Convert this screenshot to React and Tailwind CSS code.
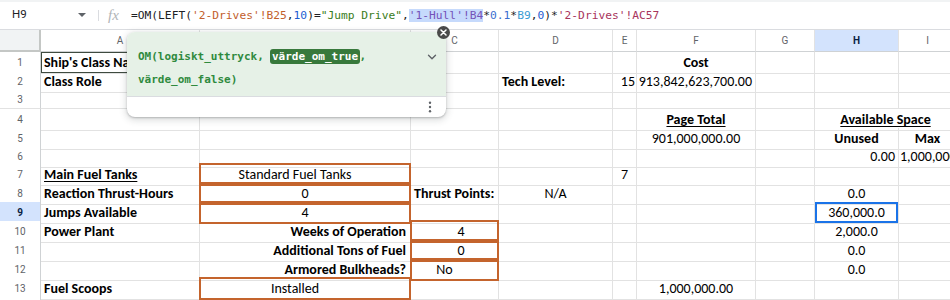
import React from "react";

const GRID =
  "grid grid-cols-[41px_159px_211px_88px_114px_24px_119px_59px_84px_58px]";
const CELLFONT = "font-[family-name:Carlito,Lato,sans-serif] text-[14px] text-black";
const UIFONT = "font-[family-name:Roboto,Arial,sans-serif]";
const MONO = "font-[family-name:'DejaVu_Sans_Mono',monospace]";

const LETTERS = ["A", "B", "C", "D", "E", "F", "G", "H", "I"];

const ROWS = [
  { n: 1, h: "h-[19px]", c: { A: { t: "Ship's Class Name", b: 1, box: "a1" }, F: { t: "Cost", b: 1, j: "c" } } },
  {
    n: 2,
    h: "h-[19px]",
    c: {
      A: { t: "Class Role", b: 1 },
      D: { t: "Tech Level:", b: 1 },
      E: { t: "15", j: "r", p: "pl-0 pr-[1px]" },
      F: { t: "913,842,623,700.00", j: "r" },
    },
  },
  { n: 3, h: "h-[19px]", c: {} },
  {
    n: 4,
    h: "h-[19px]",
    c: {
      F: { t: "Page Total", b: 1, u: 1, j: "c" },
      H: { t: "Available Space", b: 1, u: 1, j: "c", span: 1 },
    },
  },
  {
    n: 5,
    h: "h-[18px]",
    c: {
      F: { t: "901,000,000.00", j: "c" },
      H: { t: "Unused", b: 1, j: "c" },
      I: { t: "Max", b: 1, j: "c" },
    },
  },
  { n: 6, h: "h-[18px]", c: { H: { t: "0.00", j: "r" }, I: { t: "1,000,000.00", p: "pl-[1px]" } } },
  {
    n: 7,
    h: "h-[19px]",
    c: {
      A: { t: "Main Fuel Tanks", b: 1, u: 1 },
      B: { t: "Standard Fuel Tanks", j: "c", p: "pl-[3px] pr-[23px]", box: "o" },
      E: { t: "7", j: "c" },
    },
  },
  {
    n: 8,
    h: "h-[19px]",
    c: {
      A: { t: "Reaction Thrust-Hours", b: 1 },
      B: { t: "0", j: "c", box: "o" },
      C: { t: "Thrust Points:", b: 1 },
      D: { t: "N/A", j: "c" },
      H: { t: "0.0", j: "c" },
    },
  },
  {
    n: 9,
    h: "h-[19px]",
    sel: 1,
    c: {
      A: { t: "Jumps Available", b: 1 },
      B: { t: "4", j: "c", box: "o" },
      H: { t: "360,000.0", j: "c", box: "sel" },
    },
  },
  {
    n: 10,
    h: "h-[19px]",
    c: {
      A: { t: "Power Plant", b: 1 },
      B: { t: "Weeks of Operation", b: 1, j: "r", p: "pl-[3px] pr-[4px]" },
      C: { t: "4", j: "c", p: "pl-[16px] pr-[3px]", box: "o" },
      H: { t: "2,000.0", j: "c" },
    },
  },
  {
    n: 11,
    h: "h-[19px]",
    c: {
      B: { t: "Additional Tons of Fuel", b: 1, j: "r", p: "pl-[3px] pr-[4px]" },
      C: { t: "0", j: "c", p: "pl-[16px] pr-[3px]", box: "o" },
      H: { t: "0.0", j: "c" },
    },
  },
  {
    n: 12,
    h: "h-[19px]",
    c: {
      B: { t: "Armored Bulkheads?", b: 1, j: "r", p: "pl-[3px] pr-[4px]" },
      C: { t: "No", j: "c", p: "pl-[3px] pr-[23px]", box: "o" },
      H: { t: "0.0", j: "c" },
    },
  },
  {
    n: 13,
    h: "h-[19px]",
    c: {
      A: { t: "Fuel Scoops", b: 1 },
      B: { t: "Installed", j: "c", p: "pl-[3px] pr-[23px]", box: "o" },
      F: { t: "1,000,000.00", j: "c" },
    },
  },
  { n: 14, h: "h-[19px]", hide: 1, c: {} },
];

const FORMULA = [
  ["=OM(LEFT(", "text-[#202124]"],
  ["'2-Drives'!B25", "text-[#c2602c]"],
  [",", "text-[#202124]"],
  ["10", "text-[#1c5dd1]"],
  [")=", "text-[#202124]"],
  ['"Jump Drive"', "text-[#3a7d22]"],
  [",", "text-[#202124]"],
  ["'1-Hull'!B4", "text-[#7452b8] bg-[#c6dafc]"],
  ["*", "text-[#202124]"],
  ["0.1", "text-[#3a6fd0]"],
  ["*", "text-[#202124]"],
  ["B9", "text-[#3a9dd3]"],
  [",", "text-[#202124]"],
  ["0", "text-[#1c5dd1]"],
  [")*", "text-[#202124]"],
  ["'2-Drives'!AC57", "text-[#a8345c]"],
];

function FormulaBar() {
  return (
    <div className="h-[30px] border-t-2 border-t-[#f1f3f4] border-b border-b-[#dadce0] bg-white flex items-center pb-[1px]">
      <div className="w-[98px] h-full flex items-center justify-between pl-[12px] pr-[12px]">
        <span className={`${UIFONT} text-[11.5px] text-[#202124]`}>H9</span>
        <span className="w-0 h-0 border-l-[4px] border-r-[4px] border-t-[4px] border-l-transparent border-r-transparent border-t-[#5f6368]" />
      </div>
      <div className="w-px h-[11px] bg-[#dadce0]" />
      <span className="ml-[9px] w-[23px] font-[family-name:'Liberation_Serif',serif] italic text-[15px] leading-none text-[#b0b4b8]">
        fx
      </span>
      <div className={`${MONO} text-[11.25px] whitespace-nowrap leading-[13px]`}>
        {FORMULA.map(([t, c], i) => (
          <span key={i} className={c}>
            {t}
          </span>
        ))}
      </div>
    </div>
  );
}

function HeaderRow() {
  return (
    <div className={`${GRID} h-[22px]`}>
      <div className="bg-[#f1f3f4] border-r-2 border-b-2 border-[#c4c7c5]" />
      {LETTERS.map((l) => (
        <div
          key={l}
          className={`${UIFONT} text-[10px] flex items-center justify-center border-r border-b border-r-[#e2e2e2] border-b-[#cfd2d4] ${
            l === "H" ? "bg-[#d3e3fd] text-[#0a1f44] font-bold" : "bg-white text-[#5f6368]"
          }`}
        >
          {l}
        </div>
      ))}
    </div>
  );
}

function Cell({ d }) {
  const j = d?.j === "c" ? "justify-center" : d?.j === "r" ? "justify-end" : "justify-start";
  return (
    <div
      className={`relative flex items-center border-r border-b border-[#e2e2e2] whitespace-nowrap ${
        d?.p ?? "px-[3px]"
      } ${d?.span ? "col-span-2" : ""} ${j}`}
    >
      {d?.t && (
        <span className={`${d.b ? "font-bold" : ""} ${d.u ? "underline underline-offset-2" : ""}`}>{d.t}</span>
      )}
      {d?.box === "o" && (
        <div className="absolute -left-px -top-px -right-px -bottom-px border-2 border-[#c4642d] z-10" />
      )}
      {d?.box === "sel" && <div className="absolute inset-0 border-2 border-[#1a73e8] z-10" />}
      {d?.box === "a1" && <div className="absolute inset-0 border border-[#3e4b3f] z-10" />}
    </div>
  );
}

function Row({ r }) {
  const letters = LETTERS.filter((l) => !(r.c.H?.span && l === "I"));
  return (
    <div className={`${GRID} ${r.h}`}>
      <div
        className={`${UIFONT} text-[10px] flex items-center justify-center border-r border-b border-r-[#cfd2d4] border-b-[#e2e2e2] ${
          r.sel ? "bg-[#d3e3fd] text-[#0a1f44] font-bold" : "bg-white text-[#5f6368]"
        }`}
      >
        {r.hide ? null : r.n}
      </div>
      {letters.map((l) => (
        <Cell key={l} d={r.c[l]} />
      ))}
    </div>
  );
}

function Popup() {
  return (
    <>
      <div className="absolute left-[127px] top-[32px] w-[319px] h-[85px] rounded-[8px] bg-white overflow-hidden flex flex-col z-20 shadow-[0_1px_2px_rgba(60,64,67,0.3),0_2px_6px_2px_rgba(60,64,67,0.15)]">
        <div className="h-[64px] bg-[#e6f1e7] flex justify-between pl-[11px] pr-[9px] pt-[13px]">
          <div className={`${MONO} text-[11px] leading-[23px] font-bold text-[#2f8a3e] whitespace-nowrap`}>
            OM(logiskt_uttryck,{" "}
            <span className="bg-[#38793c] text-white rounded-[3px] px-[1.5px] py-[1px]">värde_om_true</span>,
            <br />
            värde_om_false)
          </div>
          <div className="h-[23px] flex items-center">
            <svg width="10" height="10" viewBox="0 0 10 10" fill="none">
              <path d="M1.5 3.2 L5 6.7 L8.5 3.2" stroke="#5f6368" strokeWidth="1.4" strokeLinecap="round" strokeLinejoin="round" />
            </svg>
          </div>
        </div>
        <div className="flex-1 border-t border-[#dadce0] flex items-center justify-end pr-[14px]">
          <svg width="4" height="12" viewBox="0 0 4 12">
            <circle cx="2" cy="1.7" r="1.2" fill="#5f6368" />
            <circle cx="2" cy="6" r="1.2" fill="#5f6368" />
            <circle cx="2" cy="10.3" r="1.2" fill="#5f6368" />
          </svg>
        </div>
      </div>
      <div className="absolute left-[437px] top-[26px] w-[13px] h-[13px] rounded-full bg-[#4a4a4a] z-30 flex items-center justify-center">
        <svg width="7" height="7" viewBox="0 0 7 7">
          <path d="M1 1 L6 6 M6 1 L1 6" stroke="#ffffff" strokeWidth="1.5" strokeLinecap="round" />
        </svg>
      </div>
    </>
  );
}

export default function App() {
  return (
    <div className="relative w-[950px] h-[300px] overflow-hidden bg-white">
      <FormulaBar />
      <HeaderRow />
      <div className={CELLFONT}>
        {ROWS.map((r) => (
          <Row key={r.n} r={r} />
        ))}
      </div>
      <Popup />
    </div>
  );
}
